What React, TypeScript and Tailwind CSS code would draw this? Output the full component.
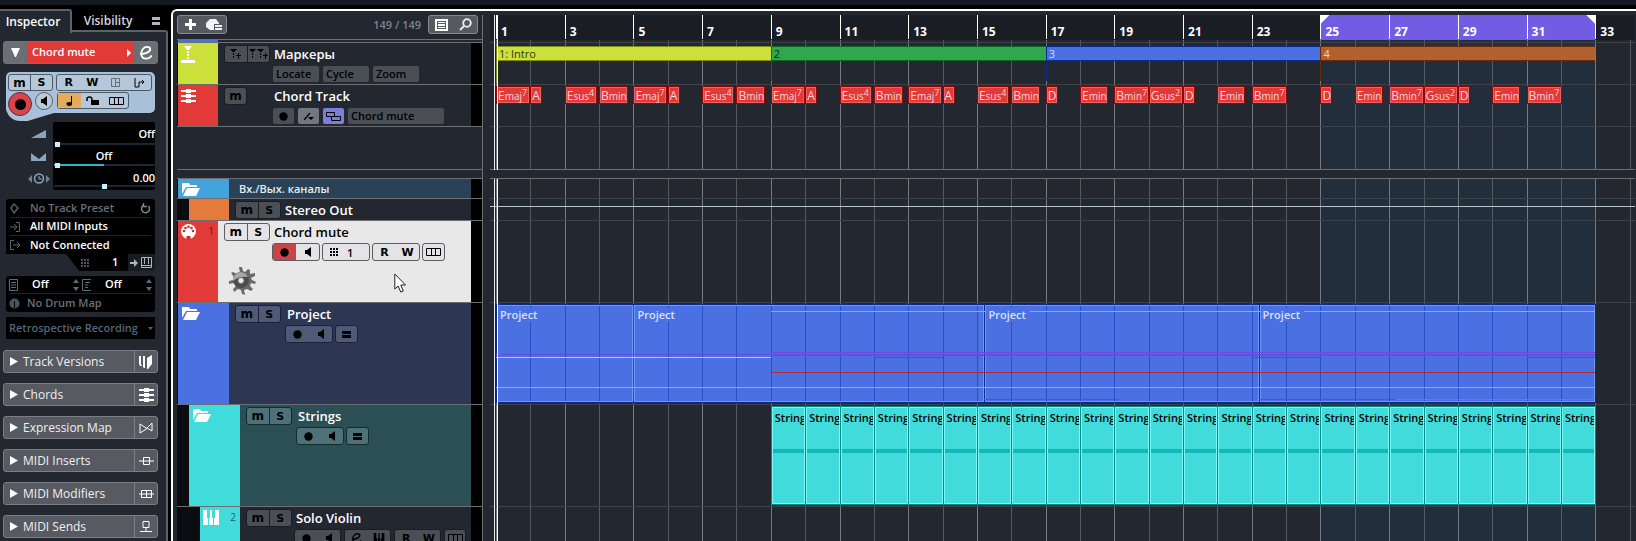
import type { ReactNode } from "react";

// One bar as a share of the timeline width
const BAR = 3.016;
const at = (bar: number) => `${(bar - 1) * BAR}%`;
const span = (bars: number) => `${bars * BAR}%`;

const bars = Array.from({ length: 34 }, (_, i) => i + 1);

const chords: [number, string, string][] = [
  ...[1, 5, 9, 13].flatMap((b): [number, string, string][] => [
    [b, "Emaj", "7"],
    [b + 1, "A", ""],
    [b + 2, "Esus", "4"],
    [b + 3, "Bmin", ""],
  ]),
  [17, "D", ""],
  [18, "Emin", ""],
  [19, "Bmin", "7"],
  [20, "Gsus", "2"],
  [21, "D", ""],
  [22, "Emin", ""],
  [23, "Bmin", "7"],
  [25, "D", ""],
  [26, "Emin", ""],
  [27, "Bmin", "7"],
  [28, "Gsus", "2"],
  [29, "D", ""],
  [30, "Emin", ""],
  [31, "Bmin", "7"],
];

const chordWidths: Record<string, string> = {
  Emaj7: "w-[34px]",
  A: "w-[12px]",
  Esus4: "w-[32px]",
  Bmin: "w-[29px]",
  D: "w-[12px]",
  Emin: "w-[28px]",
  Bmin7: "w-[35px]",
  Gsus2: "w-[34px]",
};

const markers = [
  { from: 1, to: 9, name: "1: Intro", box: "border-[#7f8c12] bg-[#cbe03a] text-[#33380c]", stem: "bg-[#7f8c12]" },
  { from: 9, to: 17, name: "2", box: "border-[#0b6a22] bg-[#30a74e] text-[#0c2a14]", stem: "bg-[#0b6a22]" },
  { from: 17, to: 25, name: "3", box: "border-[#0a2a8c] bg-[#4a70e2] text-[#d5defa]", stem: "bg-[#0a2a8c]" },
  { from: 25, to: 33, name: "4", box: "border-[#6e2a08] bg-[#b26030] text-[#f0d6c8]", stem: "bg-[#6e2a08]" },
];

const parts = [
  { from: 1, to: 5 },
  { from: 5, to: 15.22 },
  { from: 15.22, to: 23.2 },
  { from: 23.2, to: 33 },
];

// Thin event lines drawn inside the Project folder part
const events = [
  { from: 9, to: 33, style: "top-[8px] h-px bg-[#45cdea]" },
  { from: 1, to: 9, style: "top-[51px] h-px bg-[#6a4be0]" },
  { from: 9, to: 33, style: "top-[49px] h-px bg-[#6a4be0]" },
  { from: 9, to: 33, style: "top-[51px] h-[2px] bg-[#6a4be0]" },
  { from: 1, to: 9, style: "top-[54px] h-px bg-[#cddc60]" },
  { from: 12, to: 14, style: "top-[54px] h-px bg-[#c02a4c]" },
  { from: 23, to: 25, style: "top-[54px] h-px bg-[#c02a4c]" },
  { from: 31, to: 33, style: "top-[54px] h-px bg-[#c02a4c]" },
  { from: 9, to: 33, style: "top-[69px] h-px bg-[#b22a35]" },
  { from: 1, to: 33, style: "top-[84px] h-px bg-[#45cdea]" },
  { from: 15.22, to: 19.2, style: "top-[96px] h-px bg-[#b03468]" },
  { from: 23.2, to: 27.2, style: "top-[96px] h-px bg-[#b03468]" },
  { from: 27.2, to: 33, style: "top-[96px] h-px bg-[#a07850]" },
];

function FolderIcon() {
  return (
    <svg width="20" height="15" viewBox="0 0 20 15" fill="#fff">
      <path d="M1 1h7l1 2h7v2H5L1 12z" />
      <path d="M6 6h13l-4 8H2z" />
    </svg>
  );
}

function ChordIcon({ className = "" }: { className?: string }) {
  return (
    <svg className={className} width="15" height="15" viewBox="0 0 15 15" fill="#fff">
      <path d="M0 2h15v2H0zM0 7h15v2H0zM0 12h15v2H0z" />
      <path d="M5 1h5v4H5zM5 6h5v4H5zM5 11h5v4H5z" />
    </svg>
  );
}

function Dot() {
  return (
    <svg width="9" height="9" viewBox="0 0 9 9">
      <circle cx="4.5" cy="4.5" r="4.2" fill="#000" />
    </svg>
  );
}

function Speaker() {
  return (
    <svg width="6" height="10" viewBox="0 0 6 10">
      <path d="M0 3h2l4-3v10L2 7H0z" fill="#000" />
    </svg>
  );
}

function Lanes() {
  return (
    <svg width="15" height="8" viewBox="0 0 15 8" fill="none" stroke="#000">
      <path d="M.5.5h14v7H.5zM5.5.5v7M9.5.5v7" />
    </svg>
  );
}

function Equal() {
  return (
    <svg width="9" height="7" viewBox="0 0 9 7">
      <path d="M0 0h9v3H0zM0 4h9v3H0z" fill="#000" />
    </svg>
  );
}

function Keys({ className = "" }: { className?: string }) {
  return (
    <svg className={className} width="16" height="15" viewBox="0 0 16 15">
      <path d="M0 0h4v8h1v7H0zM6 8h1V0h2v8h1v7H6zM12 0h4v15h-5V8h1z" fill="currentColor" />
    </svg>
  );
}

function EditE({ className = "" }: { className?: string }) {
  return (
    <svg className={className} width="15" height="15" viewBox="0 0 15 15" fill="none" stroke="currentColor" strokeWidth="2">
      <path d="M1 8.500C7 9 12 6 12 3.500C12 1.500 10 1 8.500 1C5 1 2.500 4.500 2.500 8C2.500 11.500 4.500 13.500 7.500 13.500C10 13.500 12.500 12 13.500 10" />
    </svg>
  );
}

const tones = {
  dark: "border-[#191c20] bg-[#4a4f56]",
  blue: "border-[#1c2135] bg-[#4f5a77]",
  teal: "border-[#152a2e] bg-[#4d7177]",
  light: "border-[#5a5c60] bg-[#e4e4e6]",
};
type Tone = keyof typeof tones;

function Group({ tone, className, children }: { tone: Tone; className: string; children: ReactNode }) {
  return <div className={`flex h-[18px] shrink-0 overflow-hidden rounded-[3px] border text-black ${tones[tone]} ${className}`}>{children}</div>;
}

function Btn({ label, className = "", children }: { label: string; className?: string; children: ReactNode }) {
  return (
    <button aria-label={label} className={`flex h-full flex-1 items-center justify-center ${className}`}>
      {children}
    </button>
  );
}

const glyph = "font-['DejaVu_Sans'] text-[11px] font-bold leading-none";
const muteGlyph = "font-['DejaVu_Sans'] text-[12px] font-bold leading-none";

function MuteSolo({ tone }: { tone: Tone }) {
  return (
    <Group tone={tone} className="w-[46px]">
      <Btn label="Mute" className={`border-r border-inherit ${muteGlyph}`}>m</Btn>
      <Btn label="Solo" className={glyph}>S</Btn>
    </Group>
  );
}

type TrackProps = {
  height: string;
  indent?: string;
  stripe: string;
  icon?: ReactNode;
  number?: string;
  bg?: string;
  children: ReactNode;
};

function Track({ height, indent = "", stripe, icon, number, bg = "", children }: TrackProps) {
  return (
    <div className={`flex shrink-0 border-b border-[#6c6e73] ${height}`}>
      <div className={`shrink-0 bg-[#0a0c10] ${indent}`} />
      <div className={`flex shrink-0 justify-between pr-1 pl-[3px] text-[10px] ${stripe}`}>
        <span className="pt-[3px]">{icon}</span>
        <span className="pt-[3px] text-black/60">{number}</span>
      </div>
      <div className={`min-w-0 flex-1 ${bg}`}>{children}</div>
      <div className="w-[11px] shrink-0 bg-black" />
    </div>
  );
}

function Title({ children, className = "" }: { children: ReactNode; className?: string }) {
  return <span className={`text-[13px] leading-[18px] font-semibold whitespace-nowrap ${className}`}>{children}</span>;
}

function MonitorPair({ tone }: { tone: Tone }) {
  return (
    <>
      <Group tone={tone} className="w-[48px]">
        <Btn label="Record"><Dot /></Btn>
        <Btn label="Monitor"><Speaker /></Btn>
      </Group>
      <Group tone={tone} className="w-[23px]">
        <Btn label="Group editing"><Equal /></Btn>
      </Group>
    </>
  );
}

function TrackList() {
  return (
    <div className="flex w-[306px] shrink-0 flex-col overflow-hidden border-r border-[#6c6e73]">
      <div className="flex h-[25px] shrink-0 items-start justify-between border-b border-[#6c6e73] pr-1">
        <div className="flex h-[19px] w-[50px] items-center rounded-[3px] border border-[#85888e] bg-[#565960]">
          <Btn label="Add track">
            <svg width="11" height="11" viewBox="0 0 11 11"><path d="M4 0h3v4h4v3H7v4H4V7H0V4h4z" fill="#fff" /></svg>
          </Btn>
          <Btn label="Track presets">
            <svg width="17" height="12" viewBox="0 0 17 12" fill="#f2f2f2">
              <path d="M4 0h6l3 4v1H8v6H4L0 8V4z" />
              <path d="M9 6h7v2H9zM9 9h7v2H9z" />
            </svg>
          </Btn>
        </div>
        <div className="flex items-start gap-[7px]">
          <span className="text-[11px] leading-[20px] font-semibold text-[#7d858f]">149 / 149</span>
          <div className="flex h-[19px] w-[50px] items-center rounded-[3px] border border-[#85888e] bg-[#565960]">
            <Btn label="Track list">
              <svg width="13" height="12" viewBox="0 0 13 12" fill="#fff"><path fillRule="evenodd" d="M0 0h13v12H0zM2 2v8h9V2z" /><path d="M3 3h7v1H3zM3 5h7v2H3zM3 8h7v1H3z" /></svg>
            </Btn>
            <Btn label="Find tracks">
              <svg width="13" height="13" viewBox="0 0 13 13" fill="none" stroke="#eee" strokeWidth="1.800"><circle cx="8" cy="5" r="3.800" /><path d="M5 8 1 12" /></svg>
            </Btn>
          </div>
        </div>
      </div>
      <div className="h-[3px] shrink-0 border-b border-[#6c6e73]">
        <div className="ml-px h-[2px] w-[40px] bg-[#4a70e2]" />
      </div>
      <Track
        height="h-[42px]"
        indent="w-px"
        stripe="w-[40px] bg-[#cbe03a]"
        icon={
          <svg width="14" height="17" viewBox="0 0 14 17" fill="#fff"><path d="M3 0h8L8 4H6zM6 5h2v2H6zM6 8h2v2H6zM6 11h2v2H6zM0 14h14v3H0z" /></svg>
        }
      >
        <div className="flex gap-1 pt-[2px] pl-[6px]">
          <Group tone="dark" className="w-[46px]">
            <Btn label="Add marker" className="border-r border-inherit">
              <svg width="13" height="11" viewBox="0 0 13 11"><path d="M1 0h7L5 3H4zM4 4h1v2H4zM4 7h1v2H4zM9 4h1v2h2v1h-2v3H9V7H7V6h2z" fill="#000" /></svg>
            </Btn>
            <Btn label="Add cycle marker">
              <svg width="19" height="11" viewBox="0 0 19 11"><path d="M0 0h7L4 3H3zM3 4h1v2H3zM3 7h1v2H3zM8 0h7l-3 3h-1zM11 4h1v2h-1zM11 7h1v2h-1zM16 4h1v2h2v1h-2v3h-1V7h-2V6h2z" fill="#000" /></svg>
            </Btn>
          </Group>
          <Title className="text-white">Маркеры</Title>
        </div>
        <div className="flex gap-1 pt-[3px] pl-[55px] text-[11px] font-semibold text-black">
          {["Locate", "Cycle", "Zoom"].map((name) => (
            <button key={name} className="h-4 w-[46px] rounded-[2px] bg-[#4a4f56] pl-[3px] text-left leading-4">{name}</button>
          ))}
        </div>
      </Track>
      <Track height="h-[42px]" indent="w-px" stripe="w-[40px] bg-[#e23939]" icon={<ChordIcon />}>
        <div className="flex gap-[27px] pt-[2px] pl-[6px]">
          <Group tone="dark" className="w-[23px]">
            <Btn label="Mute" className={muteGlyph}>m</Btn>
          </Group>
          <Title className="text-white">Chord Track</Title>
        </div>
        <div className="flex gap-1 pt-[3px] pl-[55px] text-[11px] font-semibold text-black">
          <button aria-label="Record" className="flex h-4 w-[21px] items-center justify-center rounded-[2px] bg-[#4a4f56]"><Dot /></button>
          <button aria-label="Resolve" className="flex h-4 w-[21px] items-center justify-center rounded-[2px] bg-[#727680]">
            <svg width="11" height="9" viewBox="0 0 11 9"><path d="m1 8 6-7" stroke="#000" strokeWidth="1.200" /><path d="M0 6h3M5 5h6L8 8z" fill="#000" /></svg>
          </button>
          <button aria-label="Voicings" className="flex h-4 w-[21px] items-center justify-center rounded-[2px] bg-[#7a80d8]">
            <svg width="15" height="9" viewBox="0 0 15 9" fill="none" stroke="#000"><path d="M.5.500h8v4h-8zM5.500 4.500h9v4h-9z" /></svg>
          </button>
          <button className="h-4 w-[96px] rounded-[2px] bg-[#4a4f56] pl-[3px] text-left leading-4">Chord mute</button>
        </div>
      </Track>
      <div className="h-[43px] shrink-0 border-b border-[#6c6e73]" />
      <div className="h-[9px] shrink-0 border-b border-[#6c6e73]" />
      <Track height="h-[20px]" indent="w-px" stripe="w-[51px] bg-[#43a3dc]" icon={<FolderIcon />} bg="bg-[#2a4257]">
        <div className="pl-[10px] text-[11px] leading-[20px] font-semibold text-[#e6ecf2]">Вх./Вых. каналы</div>
      </Track>
      <Track height="h-[22px]" indent="w-[12px]" stripe="w-[40px] bg-[#e47a3b]">
        <div className="flex gap-1 pt-[2px] pl-[6px]">
          <MuteSolo tone="dark" />
          <Title className="text-white">Stereo Out</Title>
        </div>
      </Track>
      <Track
        height="h-[82px]"
        indent="w-px"
        stripe="w-[40px] bg-[#e23939]"
        number="1"
        bg="relative bg-[#e8e8e8]"
        icon={
          <svg width="15" height="15" viewBox="0 0 15 15">
            <circle cx="7.500" cy="7.500" r="7.500" fill="#fff" />
            <g fill="#c43030"><circle cx="3" cy="7" r="1.300" /><circle cx="4.500" cy="4" r="1.300" /><circle cx="7.500" cy="2.800" r="1.300" /><circle cx="10.500" cy="4" r="1.300" /><circle cx="12" cy="7" r="1.300" /><path d="M5.500 12h4v3h-4z" /></g>
          </svg>
        }
      >
        <div className="flex gap-1 pt-[2px] pl-[6px]">
          <MuteSolo tone="light" />
          <Title className="text-black">Chord mute</Title>
        </div>
        <div className="flex gap-[2px] pt-[2px] pl-[54px]">
          <Group tone="light" className="w-[48px]">
            <Btn label="Record" className="bg-[#c9454a]"><Dot /></Btn>
            <Btn label="Monitor"><Speaker /></Btn>
          </Group>
          <Group tone="light" className="w-[48px]">
            <Btn label="MIDI channel">
              <svg width="9" height="9" viewBox="0 0 9 9"><path d="M0 0h2v2H0zM3 0h2v2H3zM6 0h2v2H6zM0 3h2v2H0zM3 3h2v2H3zM6 3h2v2H6zM0 6h2v2H0zM3 6h2v2H3zM6 6h2v2H6z" fill="#000" /></svg>
            </Btn>
            <span className="flex-1 pl-[2px] text-[11px] leading-[17px] font-semibold">1</span>
          </Group>
          <Group tone="light" className="w-[48px]">
            <Btn label="Read automation" className={glyph}>R</Btn>
            <Btn label="Write automation" className={glyph}>W</Btn>
          </Group>
          <Group tone="light" className="w-[23px]">
            <Btn label="Lanes"><Lanes /></Btn>
          </Group>
        </div>
        <svg className="mt-[5px] ml-[9px]" width="29" height="29" viewBox="0 0 29 29">
          <path d="M12 1h3l1 4 2 1 3-3 2 1v4l5-1v3l-4 2 1 2 4 2-1 2-4-1-1 3 3 3-2 2-4-2-3 1 1 5-3-1-1-4-3-1-4 3-1-3 3-3-2-3-5 1v-3l4-1 1-3-3-4 2-1 4 2 3-1z" fill="#6a6a6a" />
          <circle cx="14" cy="14" r="8" fill="#4c4c4c" />
          <path d="M6 15a8 8 0 0 1 8-9 8 8 0 0 1 7 5c-5-1-11 0-15 4z" fill="#a8a8a8" />
          <circle cx="14" cy="14.500" r="3" fill="#e8e8e8" stroke="#777" />
        </svg>
        <svg className="absolute top-[52px] left-[176px]" width="13" height="20" viewBox="0 0 13 20">
          <path d="M.8 1v15l3.400-3 2.500 6 2.600-1-2.500-6h4.700z" fill="#fff" stroke="#222" />
        </svg>
      </Track>
      <Track height="h-[102px]" indent="w-px" stripe="w-[51px] bg-[#4a70e2]" icon={<FolderIcon />} bg="bg-[#2d3754]">
        <div className="flex gap-[6px] pt-[2px] pl-[6px]">
          <MuteSolo tone="blue" />
          <Title className="text-white">Project</Title>
        </div>
        <div className="flex gap-[2px] pt-[2px] pl-[56px]"><MonitorPair tone="blue" /></div>
      </Track>
      <Track height="h-[102px]" indent="w-[12px]" stripe="w-[51px] bg-[#42dbdb]" icon={<FolderIcon />} bg="bg-[#2a4f54]">
        <div className="flex gap-[6px] pt-[2px] pl-[6px]">
          <MuteSolo tone="teal" />
          <Title className="text-white">Strings</Title>
        </div>
        <div className="flex gap-[2px] pt-[2px] pl-[56px]"><MonitorPair tone="teal" /></div>
      </Track>
      <Track height="h-[82px]" indent="w-[23px]" stripe="w-[40px] bg-[#42dbdb]" number="2" icon={<Keys className="text-white" />}>
        <div className="flex gap-1 pt-[2px] pl-[6px]">
          <MuteSolo tone="dark" />
          <Title className="text-white">Solo Violin</Title>
        </div>
        <div className="flex gap-[3px] pt-[2px] pl-[54px]">
          <Group tone="dark" className="w-[47px]">
            <Btn label="Record"><Dot /></Btn>
            <Btn label="Monitor"><Speaker /></Btn>
          </Group>
          <Group tone="dark" className="w-[47px]">
            <Btn label="Edit channel"><EditE className="size-[11px]" /></Btn>
            <Btn label="Edit instrument"><Keys className="h-[10px] w-[12px]" /></Btn>
          </Group>
          <Group tone="dark" className="w-[47px]">
            <Btn label="Read automation" className={glyph}>R</Btn>
            <Btn label="Write automation" className={glyph}>W</Btn>
          </Group>
          <Group tone="dark" className="w-[22px]">
            <Btn label="Lanes"><Lanes /></Btn>
          </Group>
        </div>
      </Track>
    </div>
  );
}

// Bar lines and the tinted cycle range behind a block of lanes
function Grid() {
  return (
    <div className="absolute inset-y-0 right-0 left-[6px] overflow-hidden">
      <div className="absolute inset-y-0 bg-[#232e3c]" style={{ left: at(25), width: span(8) }} />
      {bars.map((b) => (
        <div key={b} className={`absolute inset-y-0 w-px ${b % 2 ? "bg-[#777a80]" : "bg-[#565a60]"}`} style={{ left: at(b) }} />
      ))}
    </div>
  );
}

function PlayHead() {
  return (
    <>
      <div className="absolute inset-y-0 left-[4px] w-px bg-[#e8eaec]" />
      <div className="absolute inset-y-0 left-[7px] w-px bg-white" />
    </>
  );
}

function Lane({ height, line = "border-[#3e4249]", children }: { height: string; line?: string; children?: ReactNode }) {
  return (
    <div className={`relative shrink-0 border-b pl-[6px] ${line} ${height}`}>
      <div className="relative h-full">{children}</div>
    </div>
  );
}

function Timeline() {
  return (
    <div className="mr-px flex min-w-0 flex-1 flex-col overflow-hidden text-[11px]">
      <div className="relative h-[25px] shrink-0 bg-[#1b1d25] pl-[6px]">
        <div className="relative h-full overflow-hidden">
          <div className="absolute inset-y-0 bg-[#735ce4]" style={{ left: at(25), width: span(8) }}>
            <div className="absolute top-0 left-0 size-[9px] bg-white [clip-path:polygon(0_0,100%_0,0_100%)]" />
            <div className="absolute top-0 right-0 size-[9px] bg-white [clip-path:polygon(0_0,100%_0,100%_100%)]" />
          </div>
          {bars.filter((b) => b % 2).map((b) => (
            <div key={b} className="absolute top-0 h-6 border-l border-white pt-[9px] pl-1 text-[12px] leading-[15px] font-bold text-white" style={{ left: at(b) }}>
              {b}
            </div>
          ))}
        </div>
        <PlayHead />
      </div>
      <div className="relative flex shrink-0 flex-col">
        <Grid />
        <Lane height="h-[3px]" />
        <Lane height="h-[42px]">
          {markers.map((m) => (
            <div key={m.name} className="absolute top-[3px]" style={{ left: at(m.from), width: span(m.to - m.from) }}>
              <div className={`h-[15px] border-y border-l pl-[2px] leading-[14px] ${m.box}`}>{m.name}</div>
              <div className={`h-5 w-px ${m.stem}`} />
            </div>
          ))}
        </Lane>
        <Lane height="h-[42px]">
          {chords.map(([bar, name, ext]) => (
            <div
              key={bar}
              className={`absolute top-px h-[18px] border border-[#8e0808] bg-[#e23939] whitespace-nowrap text-[#f8d8d8] ${chordWidths[name + ext]}`}
              style={{ left: at(bar) }}
            >
              <div className="flex h-full border border-[#f06060]">
                <span className="text-[12px] leading-[15px]">{name[0]}</span>
                <span className="text-[10px] leading-[16px]">{name.slice(1)}</span>
                <span className="text-[9px] leading-[10px]">{ext}</span>
              </div>
            </div>
          ))}
        </Lane>
        <Lane height="h-[43px]" line="border-[#6c6e73]" />
        <PlayHead />
      </div>
      <div className="h-[9px] shrink-0 border-b border-[#6c6e73]" />
      <div className="relative flex min-h-0 flex-1 flex-col overflow-hidden">
        <Grid />
        <Lane height="h-[20px]" />
        <Lane height="h-[22px]">
          <div className="absolute top-[7px] right-0 -left-[6px] h-px bg-[#b8c4cc]" />
        </Lane>
        <Lane height="h-[82px]" />
        <Lane height="h-[102px]">
          {parts.map((p) => (
            <div
              key={p.from}
              className="absolute top-px h-[99px] border border-[#0a2a8c] bg-[#4a70e2]"
              style={{ left: at(p.from), width: `calc(${span(p.to - p.from)} + 1px)` }}
            >
              <div className="h-full border border-[#6e95f8]" />
            </div>
          ))}
          {bars.slice(1, 32).map((b) => (
            <div key={b} className="absolute top-[3px] h-[95px] w-px bg-[#2650c8]" style={{ left: at(b) }} />
          ))}
          {events.map((e, i) => (
            <div key={i} className={`absolute ${e.style}`} style={{ left: at(e.from), width: span(e.to - e.from) }} />
          ))}
          {parts.map((p) => (
            <span key={p.from} className="absolute top-[5px] ml-[2px] bg-[#4a70e2] pr-1 pl-[2px] leading-[14px] font-semibold text-[#d8e0fa]" style={{ left: at(p.from) }}>
              Project
            </span>
          ))}
        </Lane>
        <Lane height="h-[102px]">
          {bars.slice(8, 32).map((b) => (
            <div key={b} className="absolute top-px h-[99px] border border-[#028c8c] bg-[#42dbdb]" style={{ left: at(b), width: `calc(${span(1)} + 1px)` }}>
              <div className="h-full overflow-hidden border border-[#7af6f4] pt-[3px] text-black">
                <div className="h-[38px] overflow-hidden pl-[2px] leading-[14px] font-semibold">Strings</div>
                <div className="h-1 bg-[#10b8b8]" />
              </div>
            </div>
          ))}
        </Lane>
        <PlayHead />
      </div>
    </div>
  );
}

const sections: [string, ReactNode][] = [
  ["Track Versions", <svg width="14" height="14" viewBox="0 0 14 14"><path d="M0 1h2v8l1 2H1L0 9zM4 1h2v12H5L4 12zM8 3l5-3v9l-4 5H8z" fill="#fff" /></svg>],
  ["Chords", <ChordIcon />],
  ["Expression Map", <svg width="14" height="12" viewBox="0 0 14 12" fill="none" stroke="#fff"><path d="M1 2v9l7-4.500zM13 1v8L8 6z" /></svg>],
  ["MIDI Inserts", <svg width="15" height="8" viewBox="0 0 15 8" fill="none" stroke="#fff"><path d="M0 4h15M4.500.500h6v7h-6z" /></svg>],
  ["MIDI Modifiers", <svg width="15" height="8" viewBox="0 0 15 8" fill="none" stroke="#fff"><path d="M0 4h15M2.500.500h10v7h-10zM7.500.500v7" /></svg>],
  ["MIDI Sends", <svg width="12" height="11" viewBox="0 0 12 11" fill="none" stroke="#fff"><path d="M3 .500h6v6H3zM6 7v3M0 10.500h12" /></svg>],
];

const steel = "border-[#4d5a68] bg-[#b4c8da]";

function Inspector() {
  return (
    <div className="flex w-[168px] shrink-0 flex-col text-[11px]">
      <div className="relative flex h-[24px] shrink-0 font-semibold text-white">
        <button className="z-10 w-[72px] rounded-tr-[3px] border-t-2 border-r-2 border-[#5d616a] bg-[#23272f] pr-1 text-[12px]">Inspector</button>
        <button className="w-[72px] text-[12px] text-[#d4d7dc]">Visibility</button>
        <button aria-label="Set up inspector" className="ml-2 flex w-2 flex-col justify-center gap-[2px]">
          <span className="h-[3px] w-full bg-[#b4b6ba]" />
          <span className="h-[3px] w-full bg-[#b4b6ba]" />
        </button>
        <div className="absolute right-0 bottom-0 left-[70px] h-[3px] rounded-tr-[6px] border-t-2 border-r-2 border-[#5d616a] bg-[#23272f]" />
      </div>
      <div className="flex flex-1 flex-col border-r-2 border-[#5d616a] bg-[#23272f] px-[3px] pt-[8px]">
        <div className="mr-[5px] flex h-[23px] shrink-0 overflow-hidden rounded-[3px] border border-[#6f737a] bg-[#6b6e73] text-white">
          <button aria-label="Collapse track" className="flex w-[23px] items-center justify-center">
            <svg width="9" height="10" viewBox="0 0 9 10"><path d="M0 0h9L5 9H4z" fill="#fff" /></svg>
          </button>
          <button className="flex flex-1 items-center justify-between bg-[#e23939] pr-[3px] pl-[5px] text-[11px] font-semibold">
            Chord mute
            <svg width="4" height="8" viewBox="0 0 4 8"><path d="m0 0 4 4-4 4z" fill="#fff" /></svg>
          </button>
          <button aria-label="Edit channel settings" className="flex w-[23px] items-center justify-center"><EditE className="size-[14px]" /></button>
        </div>

        <div className="relative mt-[8px] mr-[8px] ml-[3px] h-[41px] shrink-0 rounded-[5px] bg-[#a9c0da] px-[2px] pt-[2px] text-black">
          <div className="absolute top-[28px] left-0 h-[21px] w-[48px] rounded-bl-[14px] bg-[#a9c0da] [clip-path:polygon(0_0,100%_0,100%_62%,45%_100%,0_100%)]" />
          <div className="flex gap-[3px]">
            <div className={`flex h-[17px] w-[45px] rounded-[3px] border ${steel}`}>
              <Btn label="Mute" className={`border-r border-inherit ${muteGlyph}`}>m</Btn>
              <Btn label="Solo" className={glyph}>S</Btn>
            </div>
            <div className={`flex h-[17px] w-[96px] rounded-[3px] border ${steel}`}>
              <Btn label="Read automation" className={glyph}>R</Btn>
              <Btn label="Write automation" className={glyph}>W</Btn>
              <Btn label="Open editors">
                <svg width="10" height="9" viewBox="0 0 10 9" fill="none" stroke="#657180"><path d="M.500.500h8v8h-8zM4.500 0v9M4.500 4.500h4" /></svg>
              </Btn>
              <Btn label="Input transformer">
                <svg width="11" height="10" viewBox="0 0 11 10" fill="none" stroke="#000"><path d="M1 0v9h4V4h5M8 2l2 2-2 2" /></svg>
              </Btn>
            </div>
          </div>
          <div className="relative mt-px flex items-start gap-1">
            <button aria-label="Record enable" className="flex size-[24px] items-center justify-center rounded-full border border-[#56303a] bg-[#d9444c]">
              <span className="size-[11px] rounded-full bg-black" />
            </button>
            <button aria-label="Monitor" className="-ml-px flex size-[18px] items-center justify-center rounded-full border border-[#56606c] bg-[#b9cbdb]"><Speaker /></button>
            <div className={`flex h-[17px] w-[72px] rounded-[3px] border ${steel}`}>
              <Btn label="Musical timebase" className="bg-[#e3ab5c]">
                <svg width="7" height="10" viewBox="0 0 7 10"><path d="M5 0h1v8H5z" /><ellipse cx="3.300" cy="8" rx="2.800" ry="1.900" /></svg>
              </Btn>
              <Btn label="Lock">
                <svg width="13" height="10" viewBox="0 0 13 10"><path d="M5 4h8v5H5z" /><path d="M1 5V2.500C1 1 5 0 6 2.500V4" fill="none" stroke="#000" strokeWidth="1.500" /></svg>
              </Btn>
              <Btn label="Lanes"><Lanes /></Btn>
            </div>
          </div>
        </div>

        <div className="mt-[9px] mr-[8px] flex h-[68px] shrink-0 text-white">
          <div className="flex w-[50px] flex-col items-end pr-[7px]">
            <svg className="mt-[8px]" width="15" height="9" viewBox="0 0 15 9"><path d="M0 8 15 0v8z" fill="#8ba3bf" /></svg>
            <svg className="mt-[14px]" width="15" height="8" viewBox="0 0 15 8"><path d="M0 0v8h15V0L8 6z" fill="#8ba3bf" /></svg>
            <svg className="-mr-1 mt-[12px]" width="22" height="11" viewBox="0 0 22 11"><path d="m4 2-4 4 4 4zM18 2l4 4-4 4z" fill="#6b8199" /><circle cx="11" cy="5.500" r="4.500" fill="none" stroke="#8ba3bf" strokeWidth="1.500" /><path d="M11 3v3h3" fill="none" stroke="#8ba3bf" /></svg>
          </div>
          <div className="flex flex-1 flex-col rounded-[2px] bg-black font-semibold">
            <div className="relative flex h-[22px] items-center justify-end pt-[2px]">
              Off
              <span className="absolute -bottom-px left-px h-[2px] w-full bg-[#1a2732]" />
              <span className="absolute -bottom-[3px] left-[2px] h-[5px] w-[5px] bg-[#cdeefc]" />
            </div>
            <div className="relative flex h-[21px] items-center justify-center pt-[4px]">
              Off
              <span className="absolute -bottom-px left-px h-[2px] w-full bg-[#1a2732]" />
              <span className="absolute -bottom-px left-px h-[2px] w-[50px] bg-[#35aed0]" />
              <span className="absolute -bottom-[3px] left-[2px] h-[5px] w-[5px] bg-[#cdeefc]" />
            </div>
            <div className="relative flex h-[22px] items-center justify-end pt-[4px]">
              0.00
              <span className="absolute bottom-0 left-px h-[2px] w-full bg-[#1a2732]" />
              <span className="absolute -bottom-[2px] left-[49px] h-[5px] w-[5px] bg-[#cdeefc]" />
            </div>
          </div>
        </div>

        <div className="mt-[9px] mr-[8px] ml-[3px] shrink-0 font-semibold">
          <div className="rounded-t-[3px] bg-black px-[4px] pt-px">
            <div className="flex h-[18px] items-center justify-between border-b border-[#1d2329] text-[#66717d]">
              <span className="flex items-center gap-[10px]">
                <svg width="10" height="11" viewBox="0 0 10 11" fill="none" stroke="#55646e" strokeWidth="1.400"><path d="m4 1 4 4-4 5-3-5z" /></svg>
                No Track Preset
              </span>
              <svg width="11" height="11" viewBox="0 0 11 11" fill="none" stroke="#7d8a95" strokeWidth="1.400"><path d="M8.500 3A4 4 0 1 1 4 2M3.500 0v3.500H7" /></svg>
            </div>
            <div className="flex h-[18px] items-center gap-[10px] border-b border-[#1d2329] text-white">
              <svg width="10" height="10" viewBox="0 0 10 10" fill="none" stroke="#4f6a72"><path d="M0 5h6M4 2l3 3-3 3M6 .500h3.500v9H6" /></svg>
              All MIDI Inputs
            </div>
            <div className="flex h-[18px] items-center gap-[10px] text-white">
              <svg width="10" height="10" viewBox="0 0 10 10" fill="none" stroke="#4f6a72"><path d="M3 5h6M7 2l3 3-3 3M4 .500H.500v9H4" /></svg>
              Not Connected
            </div>
          </div>
          <div className="ml-auto flex h-[17px] w-[89px] items-center bg-black text-white [clip-path:polygon(0_0,100%_0,100%_100%,15%_100%)]">
            <svg className="ml-[15px]" width="8" height="8" viewBox="0 0 8 8"><path d="M0 0h2v2H0zM3 0h2v2H3zM6 0h2v2H6zM0 3h2v2H0zM3 3h2v2H3zM6 3h2v2H6zM0 6h2v2H0zM3 6h2v2H3zM6 6h2v2H6z" fill="#48565f" /></svg>
            <span className="ml-[23px] flex-1">1</span>
            <button aria-label="Edit instrument" className="flex h-full w-[27px] items-center gap-[3px] bg-[#161c20] pl-[2px] text-[#a9b6bd]">
              <svg width="8" height="8" viewBox="0 0 8 8"><path d="M0 3h4V0l4 4-4 4V5H0z" fill="#a9b6bd" /></svg>
              <svg width="11" height="11" viewBox="0 0 11 11" fill="none" stroke="#a9b6bd"><path d="M.500.500h10v10H.500zM3.500 0v7M7.500 0v7M0 8.500h11" /></svg>
            </button>
          </div>
        </div>

        <div className="mt-[5px] mr-[8px] ml-[3px] shrink-0 rounded-[3px] bg-black px-[3px] font-semibold">
          <div className="flex h-[18px] items-center border-b border-[#1d2329] text-white">
            <svg width="9" height="12" viewBox="0 0 9 12" fill="none" stroke="#55717a"><path d="M.500.500h8v11h-8zM2 3.500h5M2 6h5M2 8.500h5" /></svg>
            <span className="ml-[14px] flex-1">Off</span>
            <svg width="6" height="12" viewBox="0 0 6 12"><path d="m0 4 3-4 3 4zM0 8h6l-3 4z" fill="#55717a" /></svg>
            <svg className="ml-[3px]" width="9" height="12" viewBox="0 0 9 12" fill="none" stroke="#55717a"><path d="M9 .500H.500v11H9M3 3.500h5M3 6h3M3 8.500h3" /></svg>
            <span className="ml-[14px] flex-1">Off</span>
            <svg width="6" height="12" viewBox="0 0 6 12"><path d="m0 4 3-4 3 4zM0 8h6l-3 4z" fill="#55717a" /></svg>
          </div>
          <div className="flex h-[18px] items-center gap-[7px] text-[#66717d]">
            <svg width="11" height="11" viewBox="0 0 11 11"><circle cx="5.500" cy="5.500" r="5" fill="#3f5861" /><path d="M5 3h1v7H5z" fill="#000" /></svg>
            No Drum Map
          </div>
        </div>

        <button className="mt-[5px] mr-[8px] ml-[3px] flex h-[22px] shrink-0 items-center justify-between bg-black pr-[2px] pl-[3px] font-semibold text-[#566679]">
          Retrospective Recording
          <svg width="5" height="3" viewBox="0 0 5 3"><path d="M0 0h5L2.500 3z" fill="#566679" /></svg>
        </button>

        <div className="mt-[11px] mr-[5px] flex flex-col gap-[10px] text-[12px] text-[#eef0f2]">
          {sections.map(([name, icon]) => (
            <button key={name} className="flex h-[23px] items-stretch rounded-[3px] border border-[#7b7e84] bg-[#575a61] text-left">
              <span className="flex flex-1 items-center gap-[5px] pl-[6px]">
                <svg width="8" height="9" viewBox="0 0 8 9"><path d="m0 0 8 4.500L0 9z" fill="#fff" /></svg>
                {name}
              </span>
              <span className="flex w-[23px] items-center justify-center border-l border-[#7b7e84]">{icon}</span>
            </button>
          ))}
        </div>
      </div>
    </div>
  );
}

export default function App() {
  return (
    <div className="flex h-screen flex-col overflow-hidden bg-black font-['Open_Sans',sans-serif]">
      <div className="h-[5px] shrink-0 bg-[#141821]" />
      <div className="flex min-h-0 flex-1 pt-[4px]">
        <Inspector />
        <div className="ml-[3px] flex min-w-0 flex-1 rounded-tl-[6px] border-t-2 border-l-2 border-white bg-[#23272f] pt-[4px] pl-[4px]">
          <TrackList />
          <div className="w-[7px] shrink-0" />
          <Timeline />
        </div>
      </div>
    </div>
  );
}
